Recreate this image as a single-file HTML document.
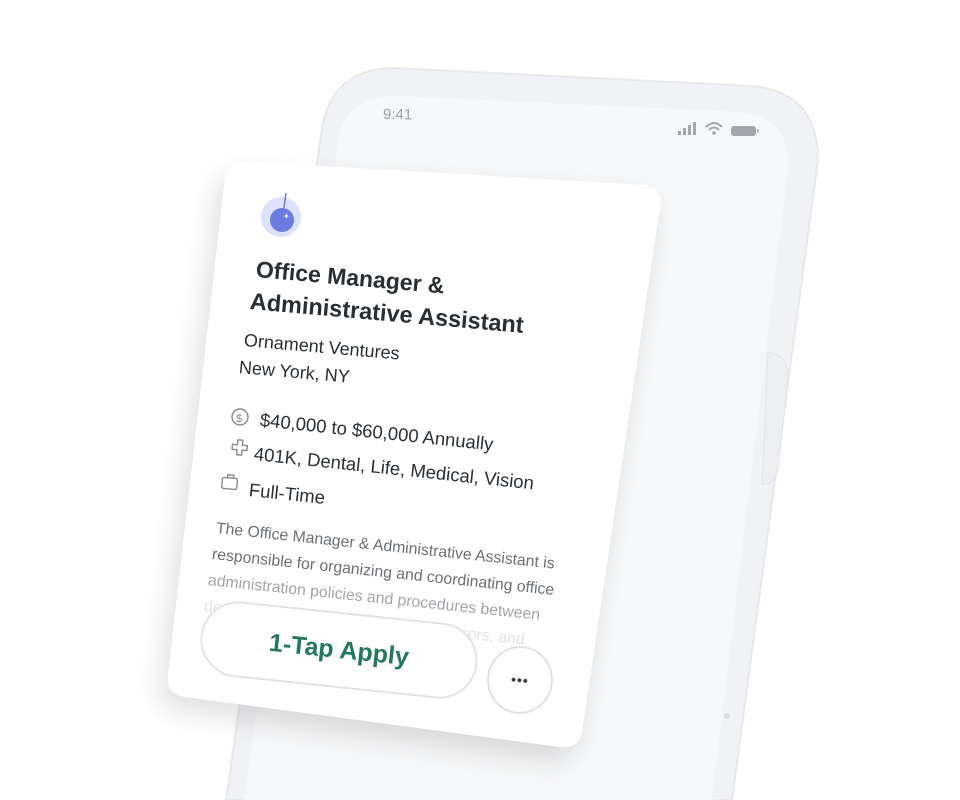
<!DOCTYPE html>
<html><head><meta charset="utf-8"><style>
html,body{margin:0;padding:0;background:#fff;}
body{width:960px;height:800px;position:relative;overflow:hidden;font-family:"Liberation Sans",sans-serif;}
.l{position:absolute;white-space:nowrap;transform-origin:0 50%;transform:rotate(5deg);}
</style></head><body>
<svg width="960" height="800" style="position:absolute;left:0;top:0">
  <defs>
    <filter id="sh" x="-30%" y="-30%" width="160%" height="160%"><feGaussianBlur stdDeviation="14"/></filter>
  </defs>
  <path d="M226 800 L322 128 Q332 68 395 68 L752 86 Q818 92 818 160 L732 800 Z" fill="#f1f2f5" stroke="#e8e9ec" stroke-width="2"/>
  <path d="M244 800 L338 140 Q346 96 398 96 L742 112 Q790 118 788 168 L712 800 Z" fill="#f6f7f8"/>
  <path d="M768 352 Q790 355 788 380 L778 470 Q775 486 762 484 Z" fill="#eceef1" stroke="#e2e4e8"/>
  <circle cx="727" cy="716" r="3" fill="#dcdee2"/>
  <path d="M255 165 L645 188 Q662 190 660 210 L582 735 Q579 752 560 750 L185 700 Q165 697 168 678 L225 180 Q228 163 255 165 Z" fill="#000" opacity="0.12" filter="url(#sh)" transform="translate(-8,10)"/>
  <path d="M255 162 L645 185 Q662 187 660 207 L582 732 Q579 749 560 747 L185 697 Q165 694 168 675 L225 177 Q228 160 255 162 Z" fill="#fff"/>
  <circle cx="281" cy="217" r="20" fill="#dde2fb"/>
  <circle cx="282" cy="220" r="12" fill="#6b7be0"/>
  <line x1="284" y1="208" x2="286" y2="193" stroke="#6b7be0" stroke-width="1.5"/>
  <text x="283" y="219" font-size="8" fill="#fff">✦</text>
  <circle cx="240" cy="417" r="8" fill="none" stroke="#888c90" stroke-width="1.4"/>
  <text x="236" y="422" font-size="11" fill="#888c90">$</text>
  <path d="M232 445 h5 v-5 h5 v5 h5 v5 h-5 v5 h-5 v-5 h-5 z" fill="none" stroke="#888c90" stroke-width="1.4" stroke-linejoin="round" transform="rotate(5 240 450)"/>
  <rect x="222" y="478" width="15" height="11" rx="2" fill="none" stroke="#888c90" stroke-width="1.4" transform="rotate(5 230 484)"/>
  <path d="M227 478 v-3 h6 v3" fill="none" stroke="#888c90" stroke-width="1.4" transform="rotate(5 230 484)"/>
  <rect x="678" y="131" width="3" height="4" fill="#a3a6ab"/>
  <rect x="683" y="128" width="3" height="7" fill="#a3a6ab"/>
  <rect x="688" y="125" width="3" height="10" fill="#a3a6ab"/>
  <rect x="693" y="122" width="3" height="13" fill="#a3a6ab"/>
  <path d="M706 127 Q714 119 722 127 M709 130 Q714 125 719 130" fill="none" stroke="#a3a6ab" stroke-width="2"/>
  <circle cx="714" cy="133" r="1.8" fill="#a3a6ab"/>
  <rect x="731" y="126" width="25" height="10" rx="3" fill="#a3a6ab"/>
  <rect x="757" y="129" width="2" height="4" fill="#c4c6ca"/>
</svg>
<div class="l" style="left:383px;top:106px;font-size:15px;color:#9ea2a7;transform:rotate(1deg)">9:41</div>
<div class="l" style="left:256px;top:256px;font-size:23px;font-weight:bold;color:#2a2f33">Office Manager &amp;</div>
<div class="l" style="left:250px;top:288px;font-size:23.5px;font-weight:bold;color:#2a2f33">Administrative Assistant</div>
<div class="l" style="left:244px;top:330px;font-size:18px;color:#2a2f33">Ornament Ventures</div>
<div class="l" style="left:239px;top:357px;font-size:18px;color:#2a2f33">New York, NY</div>
<div class="l" style="left:260px;top:409px;font-size:18.5px;color:#2a2f33;transform:rotate(6deg)">$40,000 to $60,000 Annually</div>
<div class="l" style="left:254px;top:443px;font-size:18.5px;color:#2a2f33;transform:rotate(6deg)">401K, Dental, Life, Medical, Vision</div>
<div class="l" style="left:249px;top:479px;font-size:18.5px;color:#2a2f33;transform:rotate(6deg)">Full-Time</div>
<div class="l" style="left:216px;top:520px;font-size:15.8px;color:#6c7075;transform:rotate(6deg)">The Office Manager &amp; Administrative Assistant is</div>
<div class="l" style="left:212px;top:546px;font-size:15.8px;color:#6c7075;transform:rotate(6deg)">responsible for organizing and coordinating office</div>
<div class="l" style="left:208px;top:572px;font-size:15.8px;color:#a3a6aa;transform:rotate(6deg)">administration policies and procedures between</div>
<div class="l" style="left:204px;top:598px;font-size:15.8px;color:#e2e3e5;transform:rotate(6deg)">departments, managers, and supervisors, and</div>
<div style="position:absolute;left:200px;top:612px;width:274px;height:72px;border:2px solid #e1e3e6;border-radius:40px;background:#fff;transform:rotate(6deg);display:flex;align-items:center;justify-content:center;font-size:25px;font-weight:bold;color:#237a5b">1-Tap Apply</div>
<div style="position:absolute;left:487px;top:646px;width:62px;height:64px;border:2px solid #e1e3e6;border-radius:50%;background:#fff;transform:rotate(6deg);display:flex;align-items:center;justify-content:center;font-size:14px;font-weight:bold;color:#3a3e42;letter-spacing:1px">•••</div>
</body></html>
